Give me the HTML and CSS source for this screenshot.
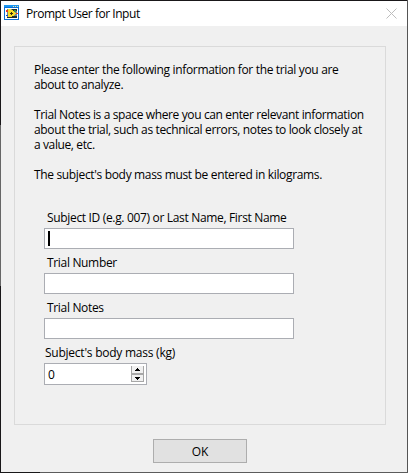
FILE: index.html
```html
<!DOCTYPE html>
<html lang="en">
<head>
<meta charset="utf-8">
<title>Prompt User for Input</title>
<link rel="stylesheet" href="styles.css">
</head>
<body>
<main class="window">
  <header class="titlebar">
    <svg class="app-icon" width="15" height="15" viewBox="0 0 15 15" shape-rendering="crispEdges">
      <path fill="#0a6fd6" d="M0 0h15v15H0z"/>
      <path fill="#1b96f0" d="M0 0h15v2H0z"/>
      <path fill="#f6e6a0" d="M9 1h1v1H9zM11 1h1v1h-1zM13 1h1v1h-1z"/>
      <path fill="#fff" d="M1 3h13v11H1z"/>
      <path fill="#6d8690" d="M3 4h10v9H3z"/>
      <path fill="#1f2f2a" d="M8 4h5v2H8zM8 11h5v2H8zM3 12h5v1H3z"/>
      <path fill="#3d8a4a" d="M10 5h2v2h-2z"/>
      <path fill="#e03a30" d="M2 5h2v2H2zM12 8h2v1h-2z"/>
      <path fill="#1746c9" d="M2 10h2v1H2z"/>
      <path fill="#f7dc28" d="M4 4h3v1h2v1h1v1h1v1h1v1h-1v1h-1v1H8v1H4z"/>
      <path fill="#332d0b" d="M7 7h1v1h1v1H8v1H7V9H6V8h1z"/>
    </svg>
    <h1 class="title">Prompt User for Input</h1>
    <svg class="close" width="11" height="11" viewBox="0 0 11 11"><path d="M.5.5l10 10M10.500.5l-10 10"/></svg>
  </header>
  <section class="panel">
    <div class="message">
      <p><span class="l1">Please enter the following information for the trial you are</span><span class="l2">about to analyze.</span></p>
      <p><span class="l3">Trial Notes is a space where you can enter relevant information</span><span class="l4">about the trial, such as technical errors, notes to look closely at</span><span class="l2">a value, etc.</span></p>
      <p><span class="l1">The subject's body mass must be entered in kilograms.</span></p>
    </div>
    <form class="fields">
      <div class="field"><label>Subject ID (e.g. 007) or Last Name, First Name</label><div class="input"><i class="caret"></i></div></div>
      <div class="field"><label>Trial Number</label><div class="input"></div></div>
      <div class="field"><label>Trial Notes</label><div class="input"></div></div>
      <div class="field"><label class="mass">Subject's body mass (kg)</label>
        <div class="input number"><span>0</span>
          <svg class="spinner" width="13" height="17" viewBox="0 0 13 17" shape-rendering="crispEdges">
            <path fill="#f0f0f0" d="M0 1h13v16H0z"/>
            <path fill="#a7a7a7" d="M0 1h1v16H0zM12 1h1v16h-1zM0 8h13v2H0zM0 16h13v1H0z"/>
            <path fill="#000" d="M6 3h1v1h1v1h1v1H4V5h1V4h1zM4 12h5v1H8v1H7v1H6v-1H5v-1H4z"/>
          </svg>
        </div>
      </div>
    </form>
  </section>
  <button class="ok" type="button">OK</button>
</main>
</body>
</html>
```
FILE: styles.css
```css
* { box-sizing: border-box; }
body {
  margin: 0;
  width: 408px;
  height: 473px;
  padding: 1px;
  overflow: hidden;
  background:
    linear-gradient(90deg, #191719 40px, #5b5b5b 40px) 0 472px / 408px 1px no-repeat,
    linear-gradient(#555 0 473px) 407px 0 / 1px 473px no-repeat,
    linear-gradient(#191719 125px, #666 125px 286px, #191719 286px) 0 0 / 1px 473px no-repeat,
    #191719;
  font: 12px/15px "Open Sans", "Noto Sans", sans-serif;
  color: #000;
}
.window {
  display: flex;
  flex-direction: column;
  width: 406px;
  height: 471px;
  background: #f0f0f0;
}
.titlebar {
  display: flex;
  align-items: center;
  flex: none;
  height: 25px;
  padding: 0 10px 0 3px;
  background: #fff;
}
.app-icon { margin-bottom: 2px; }
.title {
  margin: 0 auto 0 7px;
  font-size: 12px;
  font-weight: 400;
  letter-spacing: -.46px;
  white-space: nowrap;
}
.close { fill: none; stroke: #bdbdbd; }
.panel {
  width: 372px;
  height: 379px;
  flex: none;
  margin: 20px 0 0 13px;
  padding: 15px 0 0 19px;
  border: 1px solid #dadada;
}
.message { height: 135px; white-space: nowrap; }
.message p { margin: 0 0 15px; }
.message span { display: block; }
.l1 { letter-spacing: -.34px; }
.l2 { letter-spacing: -.39px; }
.l3 { letter-spacing: -.375px; }
.l4 { letter-spacing: -.355px; }
.fields { padding: 13px 0 0 10px; }
.field { height: 45px; }
label {
  display: block;
  height: 18px;
  padding-left: 3px;
  white-space: nowrap;
  letter-spacing: -.33px;
}
.mass { padding-left: 1px; letter-spacing: -.24px; }
.input {
  display: flex;
  align-items: center;
  width: 250px;
  height: 21px;
  padding-left: 3px;
  border: 1px solid #abadb3;
  background: #fff;
}
.caret { width: 2px; height: 15px; background: #000; }
.number {
  justify-content: space-between;
  width: 103px;
  height: 22px;
  padding-right: 2px;
}
.spinner { align-self: flex-start; margin-top: 1px; }
.ok {
  flex: none;
  width: 94px;
  height: 24px;
  margin: 14px 0 0 152px;
  padding: 0;
  border: 1px solid #adadad;
  background: #e1e1e1;
  font: inherit;
  letter-spacing: -.2px;
  color: #000;
}
```
